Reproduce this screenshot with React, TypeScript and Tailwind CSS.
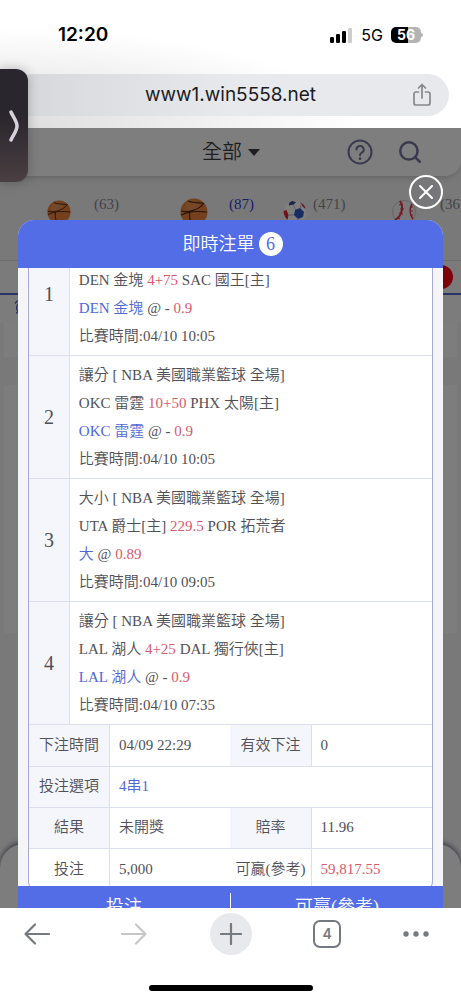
import { ReactNode } from 'react';
import { AlarmClock, Search } from 'lucide-react';

interface Bet {
  title?: string;
  home: string;
  line: string;
  away: string;
  pick: string;
  minus?: boolean;
  odds: string;
  time: string;
}

const bets: Bet[] = [
  { home: 'DEN 金塊', line: '4+75', away: 'SAC 國王[主]', pick: 'DEN 金塊', minus: true, odds: '0.9', time: '04/10 10:05' },
  { title: '讓分 [ NBA 美國職業籃球 全場]', home: 'OKC 雷霆', line: '10+50', away: 'PHX 太陽[主]', pick: 'OKC 雷霆', minus: true, odds: '0.9', time: '04/10 10:05' },
  { title: '大小 [ NBA 美國職業籃球 全場]', home: 'UTA 爵士[主]', line: '229.5', away: 'POR 拓荒者', pick: '大', odds: '0.89', time: '04/10 09:05' },
  { title: '讓分 [ NBA 美國職業籃球 全場]', home: 'LAL 湖人', line: '4+25', away: 'DAL 獨行俠[主]', pick: 'LAL 湖人', minus: true, odds: '0.9', time: '04/10 07:35' },
];

function Basketball({ className }: { className: string }) {
  return (
    <svg className={className} viewBox="0 0 28 28" aria-hidden="true">
      <circle cx="14" cy="14" r="13.5" fill="#e8803c" />
      <circle cx="12" cy="9" r="7" fill="#f5a060" opacity="0.5" />
      <g fill="none" stroke="#4a2412" strokeWidth="1.100">
        <path d="M1 13c7 2 18-1 23-8M8 3c5 2 9 2 15 2M1 17c8-4 18-4 26-3M10 14c-1 5 0 9 2 13" />
      </g>
    </svg>
  );
}

function SoccerBall({ className }: { className: string }) {
  return (
    <svg className={className} viewBox="0 0 24 24" aria-hidden="true">
      <circle cx="12" cy="12" r="11.5" fill="#ffffff" />
      <path d="M12 10l5-2 4 4-1 5-5 2-4-4z" fill="#3058c8" />
      <path d="M6 3l3-2 4 1-2 2.500-5 1z" fill="#3a4c90" />
      <path d="M0.500 11l3-1 2 5-1 5c-2-2-4-5-4-9z" fill="#e8202c" />
      <path d="M17 2l4 3 2 4-3-2z" fill="#c83a48" />
      <path d="M10 5l3 5M17 8l1-3M11 15l-6 0M15 19l-1 4" stroke="#aaaab4" strokeWidth="0.8" />
    </svg>
  );
}

function Baseball({ className }: { className: string }) {
  return (
    <svg className={className} viewBox="0 0 24 24" aria-hidden="true">
      <circle cx="12" cy="12" r="11.5" fill="#f6f2f2" stroke="#c8c0c0" strokeWidth="0.8" />
      <g fill="none" stroke="#e0384a">
        <path d="M8 1c4 6 2 15-5 19" strokeWidth="2" />
        <path d="M20 4c-3 5-2 11 1 15" strokeWidth="1.600" />
        <path d="M7 5l4-1M8 9l4 0M7 13l4 1M5 17l3 2M18 7l3 0M18 11l3 0M18 15l3 0" strokeWidth="1" />
      </g>
    </svg>
  );
}

function StatusBar() {
  return (
    <div className="flex h-[70px] items-center justify-between pr-[38px] pl-[58px] text-black">
      <span className="text-[19px] font-semibold">12:20</span>
      <div className="flex items-center gap-2">
        <svg className="h-[15px] w-[23px]" viewBox="0 0 23 15" aria-hidden="true">
          <rect x="0" y="9" width="4" height="6" rx="1.2" fill="#000" />
          <rect x="6" y="6" width="4" height="9" rx="1.2" fill="#000" />
          <rect x="12" y="3" width="4" height="12" rx="1.2" fill="#000" />
          <rect x="18" y="0" width="4" height="15" rx="1.2" fill="#ccc" />
        </svg>
        <span className="text-base">5G</span>
        <div className="flex items-center">
          <div className="flex h-4 w-[30px] items-center justify-center rounded-[5px] bg-linear-to-r from-black from-55% to-[#b4b4b4] to-55% text-sm font-bold text-white">
            56
          </div>
          <div className="h-1 w-0.5 rounded-r bg-[#b4b4b4]" />
        </div>
      </div>
    </div>
  );
}

function AddressBar() {
  return (
    <div className="px-3 pt-1 pb-3">
      <div className="flex h-[42px] items-center rounded-full bg-linear-to-r from-[#d6d7da] to-[#e7e9ed] to-50% px-[18px]">
        <input
          aria-label="網址"
          readOnly
          value="www1.win5558.net"
          className="min-w-0 flex-1 bg-transparent pl-[18px] text-center text-[19px] text-[#1c1c1e] outline-none"
        />
        <button aria-label="分享">
          <svg className="h-6 w-[18px]" viewBox="0 0 18 24" fill="none" stroke="#85888c" strokeWidth="1.7" strokeLinecap="round" strokeLinejoin="round">
            <path d="M5.500 9H3a2 2 0 0 0-2 2v9a2 2 0 0 0 2 2h12a2 2 0 0 0 2-2v-9a2 2 0 0 0-2-2h-2.500M9 15V1.500M5.500 5L9 1.500 12.500 5" />
          </svg>
        </button>
      </div>
    </div>
  );
}

// Betting page that stays behind the dimmed backdrop
function BettingPage() {
  return (
    <div className="flex h-full flex-col bg-[#f2f2f2]">
      <div className="z-10 flex h-12 shrink-0 items-center rounded-br-2xl bg-[#fcfcfc] pr-[38px] pl-[202px] shadow-md">
        <button className="flex items-center gap-1.5 text-xl text-[#3c3c40]">
          全部
          <span className="border-x-[6px] border-t-[7px] border-x-transparent border-t-[#3c3c40]" />
        </button>
        <div className="ml-auto flex items-center gap-6 text-[#74749a]">
          <button aria-label="說明">
            <svg className="size-[26px]" viewBox="0 0 26 26" fill="none" stroke="currentColor" strokeWidth="2" strokeLinecap="round">
              <circle cx="13" cy="13" r="11.5" />
              <path d="M9.500 10.500a3.600 3.600 0 1 1 5.300 3.200c-1.300.7-1.800 1.300-1.800 2.500" />
              <path d="M13 19.500v.2" strokeWidth="2.600" />
            </svg>
          </button>
          <button aria-label="搜尋">
            <Search className="size-[26px]" strokeWidth={2.3} />
          </button>
        </div>
      </div>
      <div className="flex h-[85px] shrink-0 items-start overflow-hidden border-b border-[#d8d8d8] pt-[18px] pl-[47px] text-[15px] leading-5 text-[#88888e]">
        <div className="flex w-[133px] shrink-0 gap-[23px]">
          <Basketball className="mt-1.5 size-6" />
          (63)
        </div>
        <div className="flex w-[103px] shrink-0 gap-[21px] text-[#3a38e0]">
          <Basketball className="mt-1 size-7" />
          (87)
        </div>
        <div className="flex w-[109px] shrink-0 gap-1.5">
          <SoccerBall className="mt-1.5 size-6" />
          (471)
        </div>
        <div className="flex shrink-0 gap-6">
          <Baseball className="mt-1.5 size-6" />
          (36)
        </div>
      </div>
      <div className="flex h-[34px] shrink-0 items-center justify-end border-b-2 border-[#5266cc] bg-[#f6f6f6] pr-2">
        <span className="size-6 rounded-full bg-[#fa0010]" />
      </div>
      <div className="flex h-7 shrink-0 items-start bg-[#f8f8f8] pt-1 pl-3.5">
        <AlarmClock className="size-4 text-[#4a5cc8]" />
      </div>
      <div className="mx-1 h-[34px] shrink-0 bg-[#fafafa]" />
      <div className="h-7 shrink-0" />
      <div className="mx-1 h-[248px] shrink-0 bg-[#fafafa]" />
      <div className="mt-auto h-16 shrink-0 rounded-t-3xl bg-[#fafafa] shadow-[0_-2px_5px_#77778a]" />
    </div>
  );
}

function BetRow({ bet, index }: { bet: Bet; index: number }) {
  return (
    <tr className="border-b border-[#dcdff0]">
      <th scope="row" className="w-[10%] border-r border-[#dcdff0] bg-[#f5f6fc] text-xl font-normal">
        {index}
      </th>
      <td className="py-[5px] pl-[9px] leading-7">
        <p className="h-7">{bet.title}</p>
        <p>
          {bet.home} <span className="text-[#d9596b]">{bet.line}</span> {bet.away}
        </p>
        <p>
          <span className="text-[#4f68d6]">{bet.pick}</span> @ {bet.minus && '- '}
          <span className="text-[#d9596b]">{bet.odds}</span>
        </p>
        <p>比賽時間:{bet.time}</p>
      </td>
    </tr>
  );
}

function Label({ children, plain }: { children: ReactNode; plain?: boolean }) {
  return (
    <th
      scope="row"
      className={`border-r border-[#dcdff0] text-center font-[350] whitespace-nowrap ${plain ? '' : 'bg-[#f5f6fc]'}`}
    >
      {children}
    </th>
  );
}

function BetSlip() {
  return (
    <section className="absolute inset-x-[18px] top-[92px] -bottom-5 flex flex-col overflow-hidden rounded-t-2xl bg-[#f5f5f7]">
      <h2 className="flex h-12 shrink-0 items-center justify-center gap-1 bg-[#536de6] pl-1 text-lg font-[350] text-white">
        即時注單
        <span className="flex size-6 items-center justify-center rounded-full bg-white text-[#536de6]">6</span>
      </h2>
      <div className="min-h-0 flex-1 overflow-hidden px-2.5">
        <div className="-mt-9 overflow-hidden rounded-b-lg border border-[#a6abd2] bg-white text-[15px] text-[#505058]">
          <table className="w-full">
            <tbody>
              {bets.map((bet, i) => (
                <BetRow key={i} bet={bet} index={i + 1} />
              ))}
            </tbody>
          </table>
          <table className="w-full table-fixed">
            <colgroup>
              <col className="w-[20%]" />
              <col className="w-[30%]" />
              <col className="w-[20%]" />
              <col className="w-[30%]" />
            </colgroup>
            <tbody>
              <tr className="h-[41px] border-b border-[#dcdff0]">
                <Label>下注時間</Label>
                <td className="pl-[9px]">04/09 22:29</td>
                <Label>有效下注</Label>
                <td className="pl-[9px]">0</td>
              </tr>
              <tr className="h-[41px] border-b border-[#dcdff0]">
                <Label>投注選項</Label>
                <td colSpan={3} className="pl-[9px] text-[#4f68d6]">4串1</td>
              </tr>
              <tr className="h-[41px] border-b border-[#dcdff0]">
                <Label>結果</Label>
                <td className="pl-[9px]">未開獎</td>
                <Label>賠率</Label>
                <td className="pl-[9px]">11.96</td>
              </tr>
              <tr className="h-[41px]">
                <Label plain>投注</Label>
                <td className="pl-[9px]">5,000</td>
                <Label plain>可贏(參考)</Label>
                <td className="pl-[9px] text-[#d9596b]">59,817.55</td>
              </tr>
            </tbody>
          </table>
        </div>
      </div>
      <div className="flex h-[42px] shrink-0 items-center bg-[#536de6] text-lg text-white">
        <span className="flex-1 text-center">投注</span>
        <span className="h-7 w-px bg-white" />
        <span className="flex-1 text-center">可贏(參考)</span>
      </div>
    </section>
  );
}

function BrowserToolbar() {
  return (
    <nav className="flex h-[92px] shrink-0 flex-col items-center bg-white pt-[5px]">
      <div className="flex w-full justify-between px-4 text-[#747a80]">
        <button aria-label="上一頁" className="flex size-[42px] items-center justify-center">
          <svg className="h-[22px] w-[26px]" viewBox="0 0 26 22" fill="none" stroke="currentColor" strokeWidth="2.200" strokeLinecap="round" strokeLinejoin="round">
            <path d="M25 11H1.500M11 1.500L1.500 11l9.500 9.500" />
          </svg>
        </button>
        <button aria-label="下一頁" className="flex size-[42px] items-center justify-center text-[#c6c7c9]">
          <svg className="h-[22px] w-[26px]" viewBox="0 0 26 22" fill="none" stroke="currentColor" strokeWidth="2.200" strokeLinecap="round" strokeLinejoin="round">
            <path d="M1 11h23.500M15 1.500l9.500 9.500-9.500 9.500" />
          </svg>
        </button>
        <button aria-label="新分頁" className="flex size-[42px] items-center justify-center rounded-full bg-[#e8e9ec]">
          <svg className="size-[22px]" viewBox="0 0 22 22" fill="none" stroke="currentColor" strokeWidth="2.200" strokeLinecap="round">
            <path d="M11 1v20M1 11h20" />
          </svg>
        </button>
        <button aria-label="分頁" className="flex size-[42px] items-center justify-center">
          <span className="flex size-7 items-center justify-center rounded-[7px] border-2 border-current text-sm font-semibold">4</span>
        </button>
        <button aria-label="更多" className="flex size-[42px] items-center">
          <svg className="h-1.5 w-[26px]" viewBox="0 0 26 6" fill="currentColor">
            <circle cx="3" cy="3" r="2.7" />
            <circle cx="13" cy="3" r="2.7" />
            <circle cx="23" cy="3" r="2.7" />
          </svg>
        </button>
      </div>
      <div className="mt-auto mb-[9px] h-1.5 w-[164px] rounded-full bg-black" />
    </nav>
  );
}

export default function App() {
  return (
    <div className="relative flex h-screen flex-col overflow-hidden bg-white font-['Inter','Noto_Sans_CJK_TC',sans-serif]">
      <header className="bg-[radial-gradient(ellipse_at_0%_100%,#dcdcdc,#ffffff_55%)]">
        <StatusBar />
        <AddressBar />
      </header>
      <main className="relative isolate min-h-0 flex-1 overflow-hidden font-['Liberation_Serif','Noto_Sans_CJK_TC',serif] font-[350]">
        <BettingPage />
        <div className="absolute inset-0 z-20 bg-black/50" />
        <div className="absolute inset-0 z-20">
          <BetSlip />
          <button
            aria-label="關閉"
            className="absolute top-[47px] right-[18px] flex size-[34px] items-center justify-center rounded-full border-2 border-white bg-[#77777a]"
          >
            <svg className="size-3.5" viewBox="0 0 14 14" fill="none" stroke="#fff" strokeWidth="2" strokeLinecap="round">
              <path d="M1 1l12 12M13 1L1 13" />
            </svg>
          </button>
        </div>
      </main>
      <BrowserToolbar />
      <button
        aria-label="展開"
        className="absolute top-[69px] left-0 flex h-[113px] w-7 items-center rounded-r-xl bg-linear-to-b from-[#2a262d] from-40% to-[#4a3f42] pl-2 shadow-[0_0_12px_#00000040]"
      >
        <svg className="h-8 w-3" viewBox="0 0 12 32" fill="none" stroke="#d6d2dc" strokeWidth="3.500" strokeLinecap="round" strokeLinejoin="round">
          <path d="M3 2c2 5 6 9 6 14s-4 9-6 14" />
        </svg>
      </button>
    </div>
  );
}
